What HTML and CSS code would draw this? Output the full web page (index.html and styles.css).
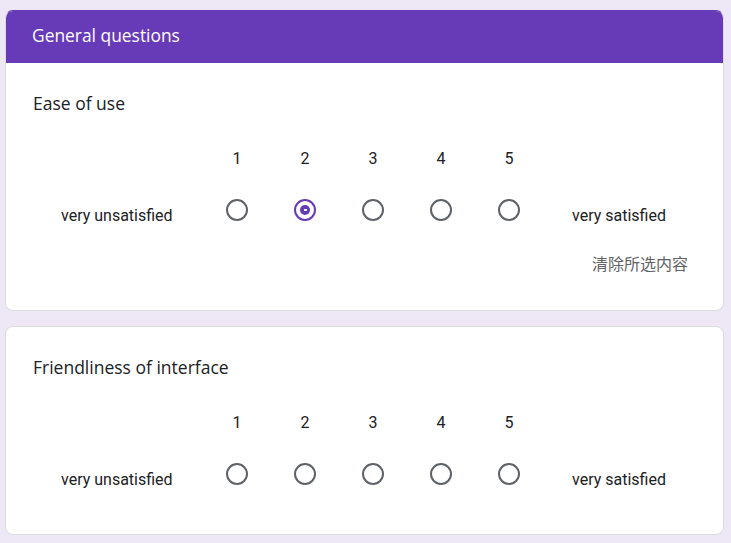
FILE: index.html
```html
<!DOCTYPE html>
<html lang="en">
<head>
<meta charset="utf-8">
<title>General questions</title>
<link rel="stylesheet" href="styles.css">
</head>
<body>
<div class="page">
  <section class="card card-first">
    <header class="card-header">General questions</header>
    <div class="card-body">
      <div class="q-title">Ease of use</div>
      <div class="scale">
        <div class="label-col"></div>
        <div class="num">1</div>
        <div class="num">2</div>
        <div class="num">3</div>
        <div class="num">4</div>
        <div class="num">5</div>
      </div>
      <div class="scale scale-radios">
        <div class="label-col end-label">very unsatisfied</div>
        <div class="cell"><span class="radio"></span></div>
        <div class="cell"><span class="radio checked"></span></div>
        <div class="cell"><span class="radio"></span></div>
        <div class="cell"><span class="radio"></span></div>
        <div class="cell"><span class="radio"></span></div>
        <div class="label-col end-label">very satisfied</div>
      </div>
      <div class="clear-row"><span class="clear-btn">清除所选内容</span></div>
    </div>
  </section>
  <section class="card">
    <div class="card-body">
      <div class="q-title">Friendliness of interface</div>
      <div class="scale">
        <div class="label-col"></div>
        <div class="num">1</div>
        <div class="num">2</div>
        <div class="num">3</div>
        <div class="num">4</div>
        <div class="num">5</div>
      </div>
      <div class="scale scale-radios last">
        <div class="label-col end-label">very unsatisfied</div>
        <div class="cell"><span class="radio"></span></div>
        <div class="cell"><span class="radio"></span></div>
        <div class="cell"><span class="radio"></span></div>
        <div class="cell"><span class="radio"></span></div>
        <div class="cell"><span class="radio"></span></div>
        <div class="label-col end-label">very satisfied</div>
      </div>
    </div>
  </section>
</div>
</body>
</html>
```
FILE: styles.css
```css
html, body {
  margin: 0;
  padding: 0;
  background: #ede7f6;
}
body {
  font-family: Roboto, "Noto Sans CJK SC", sans-serif;
  color: #202124;
}
.page {
  padding: 10px 7px 0 5px;
  display: flex;
  flex-direction: column;
  gap: 15px;
}
.card {
  background: #fff;
  border: 1px solid #dadce0;
  border-radius: 8px;
  overflow: hidden;
}
.card-first {
  border-top-color: #673ab7;
}
.card-header {
  background: #673ab7;
  color: #fff;
  height: 52px;
  padding-left: 26px;
  display: flex;
  align-items: center;
  font-family: "Open Sans", sans-serif;
  font-size: 17.4px;
  font-weight: 500;
  padding-bottom: 4px;
  box-sizing: border-box;
}
.card-body {
  padding: 28px 0 0 27px;
}
.q-title {
  font-family: "Open Sans", sans-serif;
  font-size: 17.5px;
  line-height: 24px;
  color: #202124;
}
.scale {
  display: flex;
  align-items: center;
  margin-top: 34px;
}
.label-col {
  padding: 0 28px;
}
.scale > .label-col:first-child {
  width: 114px;
}
.num {
  width: 68px;
  text-align: center;
  font-size: 16px;
  line-height: 20px;
}
.scale-radios {
  margin-top: 25px;
  align-items: flex-start;
  height: 48px;
}
.cell {
  width: 68px;
  display: flex;
  justify-content: center;
  padding-top: 5px;
}
.end-label {
  font-size: 16px;
  line-height: 24px;
  padding-top: 10px;
  white-space: nowrap;
}
.scale > .label-col:last-child {
  padding-left: 29px;
}
.radio {
  box-sizing: border-box;
  width: 22px;
  height: 22px;
  border: 2px solid #5f6368;
  border-radius: 50%;
  display: flex;
  align-items: center;
  justify-content: center;
}
.radio.checked {
  border-color: #673ab7;
}
.radio.checked::before {
  content: "";
  width: 10px;
  height: 10px;
  border-radius: 50%;
  background: #673ab7;
  background-image: linear-gradient(#fff, #fff);
  background-size: 3px 2px;
  background-position: center;
  background-repeat: no-repeat;
}
.clear-row {
  display: flex;
  justify-content: flex-end;
  padding: 9px 35px 0 0;
  height: 59px;
}
.clear-btn {
  font-family: "Noto Sans CJK SC", sans-serif;
  font-size: 16px;
  line-height: 24px;
  color: #5f6368;
}
.scale-radios.last {
  height: 76px;
}
```
